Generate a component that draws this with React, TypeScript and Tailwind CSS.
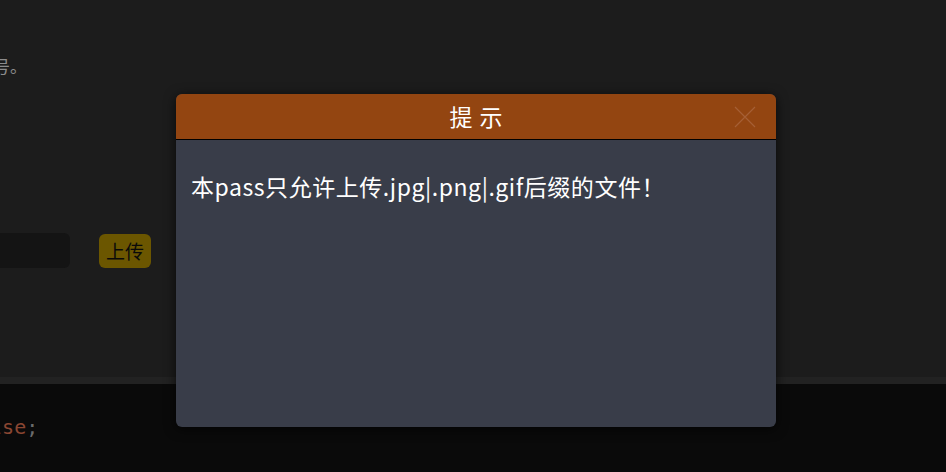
export default function App() {
  return (
    <div className="relative w-[946px] h-[472px] overflow-hidden flex flex-col bg-[#0a0a0a] font-['Liberation_Sans','Noto_Sans_CJK_SC',sans-serif]">
      {/* page behind the shade */}
      <div className="h-[377px] bg-[#1c1c1c] flex flex-col">
        <p className="mt-[56px] ml-[-24px] text-[17px] leading-[24px] text-[#8c8c8c] whitespace-nowrap">符号。</p>
        <div className="mt-[153px] flex items-center">
          <div className="ml-[-20px] w-[90px] h-[35px] rounded-md bg-[#141414]" />
          <button className="ml-[29px] h-[34px] px-[7px] rounded-md bg-[#6b5600] font-['Noto_Sans_CJK_SC',sans-serif] text-[19px] leading-[34px] text-[#0a0a0a]">上传</button>
        </div>
      </div>
      <div className="h-[7px] bg-[#222222]" />
      <div className="flex-1 pt-[31px]">
        <p className="ml-[-34px] font-['DejaVu_Sans_Mono',monospace] text-[20px] leading-[24px] whitespace-nowrap">
          <span className="text-[#8a4632]">false</span>
          <span className="text-[#6b6b6b]">;</span>
        </p>
      </div>

      {/* dialog */}
      <div className="absolute left-[176px] top-[94px] w-[600px] h-[333px] rounded-[6px] overflow-hidden bg-[#393d49] shadow-[0_2px_12px_rgba(0,0,0,0.7)] flex flex-col">
        <div className="relative h-[46px] bg-[#934511] border-b border-black flex items-center justify-center">
          <span className="text-white font-['Noto_Sans_CJK_SC',sans-serif] text-[23px] tracking-[7px] pl-[7px] leading-none">提示</span>
          <svg className="absolute right-[20px] top-[12px]" width="22" height="22" viewBox="0 0 22 22">
            <path d="M1 1 L21 21 M21 1 L1 21" stroke="#a55f35" strokeWidth="1.2" fill="none" />
          </svg>
        </div>
        <div className="px-[15px] pt-[28px]">
          <p className="text-white font-['Noto_Sans_CJK_SC',sans-serif] text-[23px] tracking-[0.55px] leading-[36px] whitespace-nowrap">本pass只允许上传.jpg|.png|.gif后缀的文件！</p>
        </div>
      </div>
    </div>
  );
}
